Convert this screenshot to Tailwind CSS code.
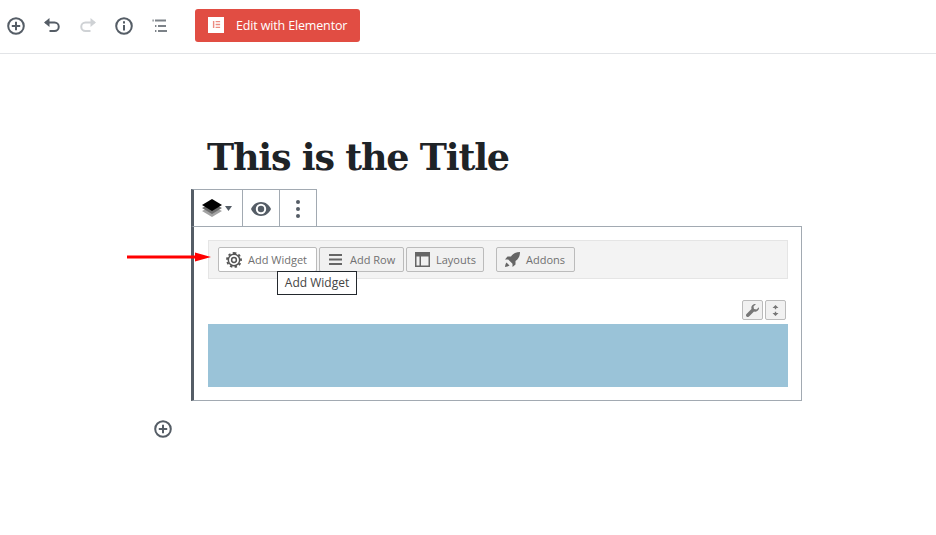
<!DOCTYPE html>
<html>
<head>
<meta charset="utf-8">
<script src="https://cdn.jsdelivr.net/npm/@tailwindcss/browser@4"></script>
</head>
<body class="bg-white font-['Open_Sans',sans-serif] overflow-hidden">
<div class="w-[936px] h-[535px] relative">
  <header class="h-[54px] border-b border-[#e2e4e7] flex items-center pl-[7px]">
    <div class="flex items-center text-[#555d66] -mt-px">
      <svg class="w-[18px] h-[18px]" viewBox="0 0 18 18" fill="none" stroke="#555d66" stroke-width="2"><circle cx="9" cy="9" r="7.800"/><path d="M9 4.800v8.400M4.800 9h8.400"/></svg>
      <svg class="w-[18px] h-[18px] ml-[18px]" viewBox="0 0 18 18" fill="none" stroke="#555d66" stroke-width="2"><path d="M2.500 5.500h9a4.200 4.200 0 0 1 0 8.500H6.500"/><path fill="#555d66" stroke="none" d="M6.500 1v9L1 5.500z"/></svg>
      <svg class="w-[18px] h-[18px] ml-[18px]" viewBox="0 0 18 18" fill="none" stroke="#cfd2d5" stroke-width="2"><path d="M15.500 5.500h-9a4.200 4.200 0 0 0 0 8.500h5"/><path fill="#cfd2d5" stroke="none" d="M11.500 1v9L17 5.500z"/></svg>
      <svg class="w-[18px] h-[18px] ml-[18px]" viewBox="0 0 18 18" fill="none" stroke="#555d66" stroke-width="2"><circle cx="9" cy="9" r="7.800"/><path d="M9 8v5.400M9 4.200v2.200"/></svg>
      <svg class="w-[18px] h-[18px] ml-[18px]" viewBox="0 0 18 18" fill="none" stroke="#7c8288" stroke-width="1.800"><path d="M1.500 3.500h1.200M4 3.500h11M4 9h1.400M7 9h8M4 14h1.400M7 14h9"/></svg>
    </div>
    <a class="ml-[26px] -mt-[2px] w-[165px] h-[33px] rounded-[3px] bg-[#e14d43] flex items-center pl-[13px] text-white text-[12.5px] tracking-[-0.15px]">
      <span class="w-4 h-4 bg-white flex justify-center items-center -mt-[2px]">
        <svg class="w-[9px] h-[9px]" viewBox="0 0 10 10"><path fill="#ec8a80" d="M1 1h1.600v8H1zM4 1h5v1.500H4zM4 4.200h5v1.500H4zM4 7.500h5V9H4z"/></svg>
      </span>
      <span class="ml-[12px] leading-none mt-[1px]">Edit with Elementor</span>
    </a>
  </header>

  <main class="pl-[191px] pt-[77px]">
    <h1 class="pl-[16px] h-[58px] pt-[1px] font-['DejaVu_Serif',serif] font-bold text-[36.500px] leading-[52px] text-[#1e2327] tracking-[-1.200px] whitespace-nowrap">This is the Title</h1>

    <div class="flex h-[38px] w-[126px] border border-b-0 border-[#a2aab2] border-l-[3px] border-l-[#555d66] -mb-px">
      <div class="w-[49px] border-r border-[#a2aab2] flex items-center pl-[7px]">
        <svg class="w-[22px] h-[22px]" viewBox="0 0 22 22"><path fill="#a3a3a3" d="M11 8l10 5-10 6-10-6z"/><path fill="#6b6b6b" d="M11 5l10 5-10 6-10-6z"/><path fill="#000" d="M11 1l10 6-10 6L1 7z"/></svg>
        <svg class="w-[7px] h-[5px] ml-[2px]" viewBox="0 0 7 5"><path fill="#555d66" d="M0 0h7L3.500 5z"/></svg>
      </div>
      <div class="w-[37px] border-r border-[#a2aab2] flex items-center justify-center">
        <svg class="w-[20px] h-[14px]" viewBox="0 0 20 14"><path fill="#555d66" d="M10 0C5.500 0 1.800 2.800 0 7c1.800 4.200 5.500 7 10 7s8.200-2.800 10-7c-1.800-4.200-5.500-7-10-7zm0 12.200a5.200 5.200 0 1 1 0-10.400 5.200 5.200 0 0 1 0 10.400z"/><circle cx="10" cy="7" r="3.200" fill="#555d66"/></svg>
      </div>
      <div class="w-[36px] flex items-center justify-center">
        <svg class="w-[4px] h-[18px]" viewBox="0 0 4 18"><circle cx="2" cy="2" r="2" fill="#555d66"/><circle cx="2" cy="9" r="2" fill="#555d66"/><circle cx="2" cy="16" r="2" fill="#555d66"/></svg>
      </div>
    </div>

    <section class="w-[611px] h-[175px] border border-[#a2aab2] border-l-[3px] border-l-[#555d66] pl-[14px] pr-[13px] pt-[13px]">
      <div class="h-[39px] bg-[#f3f3f3] border border-[#e5e5e5] flex items-center pl-[9px] text-[11px] text-[#707070]">
        <button class="h-[25px] w-[99px] bg-white border border-[#bbb] rounded-[2px] flex items-center pl-[7px] pt-[1px]">
          <svg class="w-[16px] h-[16px] shrink-0 -mt-px" viewBox="0 0 16 16" fill="none" stroke="#555" stroke-width="1.500"><circle cx="8" cy="8" r="2.400"/><circle cx="8" cy="8" r="5.700"/><path stroke-width="1.800" stroke-dasharray="2.400 2.310" d="M8 1a7 7 0 1 1 0 14 7 7 0 1 1 0-14"/></svg>
          <span class="ml-[6px]">Add Widget</span>
        </button>
        <button class="ml-[2px] h-[25px] w-[85px] bg-[#f1f1f1] border border-[#bbb] rounded-[2px] flex items-center pl-[9px] pt-[1px]">
          <svg class="w-[13px] h-[11px] shrink-0 -mt-px" viewBox="0 0 13 11"><path fill="#666" d="M0 0h13v2H0zM0 4.500h13v2H0zM0 9h13v2H0z"/></svg>
          <span class="ml-[8px]">Add Row</span>
        </button>
        <button class="ml-[2px] h-[25px] w-[78px] bg-[#f1f1f1] border border-[#bbb] rounded-[2px] flex items-center pl-[8px] pt-[1px]">
          <svg class="w-[15px] h-[15px] shrink-0 -mt-px" viewBox="0 0 15 15"><path fill="#666" d="M0 0h15v15H0z"/><path fill="#f1f1f1" d="M1.500 4.500h3v9h-3zM6 4.500h7.500v9H6z"/></svg>
          <span class="ml-[6px]">Layouts</span>
        </button>
        <button class="ml-[12px] h-[25px] w-[79px] bg-[#f1f1f1] border border-[#bbb] rounded-[2px] flex items-center pl-[8px] pt-[1px]">
          <svg class="w-[15px] h-[15px] shrink-0 -mt-px" viewBox="0 0 15 15"><path fill="#666" d="M15 0c-4 0-7 1.500-9 4.500H2.500L0 7.500h3.200l4.300 4.300V15l3-2.500V9c3-2 4.500-5 4.500-9zM1.500 10.500C0.500 11.500 0.300 13.500 0 15c1.500-.3 3.500-.5 4.500-1.500z"/></svg>
          <span class="ml-[6px]">Addons</span>
        </button>
      </div>
      <div class="h-[45px] flex justify-end items-end gap-[2px] pb-[4px] pr-[2px]">
        <button class="w-[21px] h-[20px] bg-[#f1f1f1] border border-[#bbb] rounded-[2px] flex items-center justify-center">
          <svg class="w-[13px] h-[13px]" viewBox="0 0 13 13"><path fill="#777" d="M13 3.200L10.500 5.500 8 5 7.500 2.500 10 0C7.800-.4 5.500 1 5.300 3.500c0 .6.100 1.100.2 1.500L.5 10c-.7.700-.7 1.700 0 2.500s1.800.7 2.500 0l5-5c.5.100 1 .2 1.500.2C12 7.500 13.400 5.200 13 3.200z"/></svg>
        </button>
        <button class="w-[21px] h-[20px] bg-[#f1f1f1] border border-[#bbb] rounded-[2px] flex items-center justify-center">
          <svg class="w-[7px] h-[11px]" viewBox="0 0 7 11"><path fill="#777" d="M3.500 0L6.500 3H4.200v1.300H2.800V3H.5zM3.500 11L.5 8h2.300V6.700h1.400V8h2.300z"/></svg>
        </button>
      </div>
      <div class="h-[63px] bg-[#9ac3d8]"></div>
    </section>

    <svg class="-ml-[37px] mt-[19px] w-[18px] h-[18px]" viewBox="0 0 18 18" fill="none" stroke="#555d66" stroke-width="2"><circle cx="9" cy="9" r="7.800"/><path d="M9 4.800v8.400M4.800 9h8.400"/></svg>
  </main>

  <div class="absolute left-[277px] top-[271px] w-[80px] h-[24px] bg-white border border-[#23282d] flex items-center justify-center text-[12px] text-[#444]">Add Widget</div>
  <svg class="absolute left-[127px] top-[251px] w-[84px] h-[12px]" viewBox="0 0 84 12"><path fill="#f00" d="M0 4.500h68V1.500L84 6 68 10.500V7.500H0z"/></svg>
</div>
</body>
</html>
